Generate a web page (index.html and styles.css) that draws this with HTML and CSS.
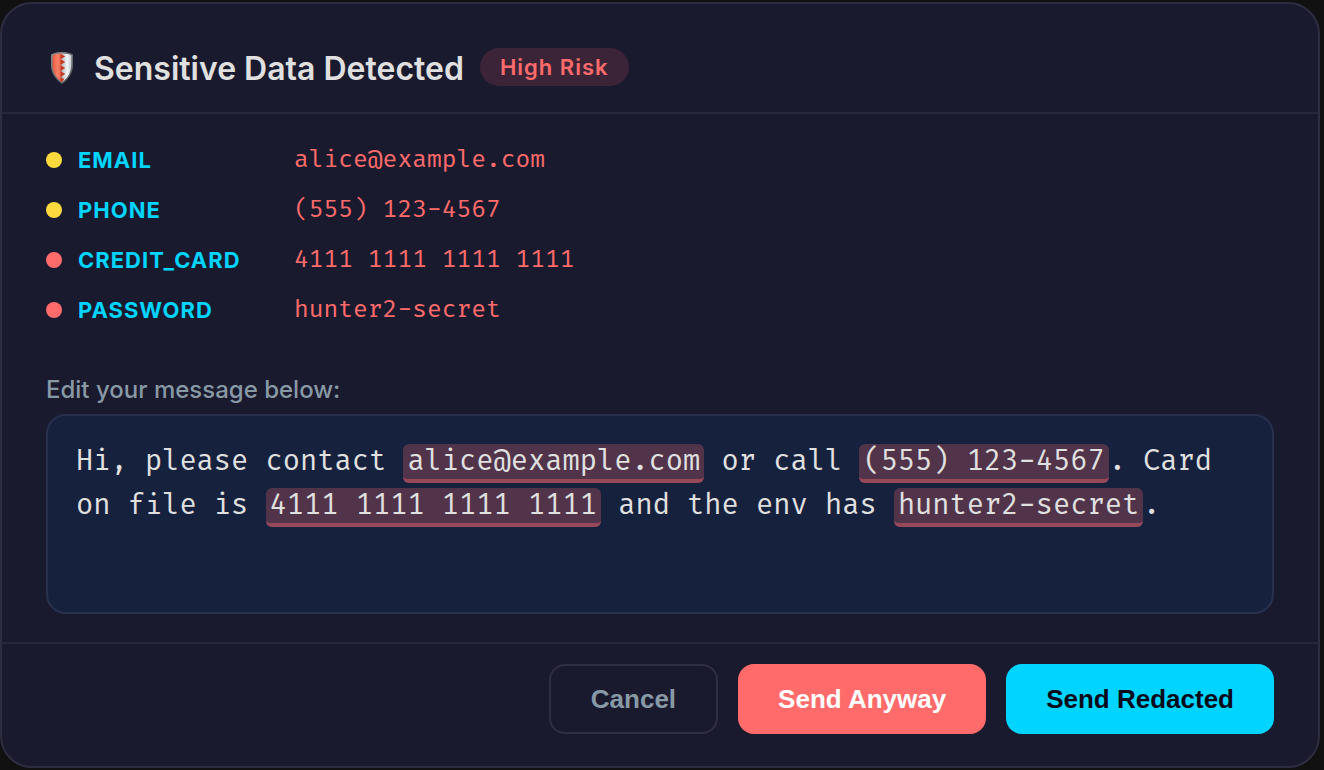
FILE: index.html
```html
<!DOCTYPE html>
<html lang="en">
<head>
  <meta charset="UTF-8">
  <meta name="viewport" content="width=device-width, initial-scale=1">
  <title>Sensitive Data Detected</title>
  <link rel="stylesheet" href="styles.css">
</head>
<body>
  <main class="dialog">
    <header class="dialog-header">
      <svg class="shield" viewBox="0 0 32 38" aria-hidden="true">
        <defs>
          <linearGradient id="rim" x1="0" y1="0" x2="1" y2="1">
            <stop offset="0" stop-color="#8b8b8d"/>
            <stop offset="1" stop-color="#555558"/>
          </linearGradient>
          <linearGradient id="red" x1="0" y1="0" x2="1" y2="0">
            <stop offset="0" stop-color="#e8583f"/>
            <stop offset="0.4" stop-color="#ff8068"/>
            <stop offset="1" stop-color="#d8452c"/>
          </linearGradient>
          <linearGradient id="silver" x1="0" y1="0" x2="1" y2="0">
            <stop offset="0" stop-color="#a9b1b6"/>
            <stop offset="0.6" stop-color="#f4f6f8"/>
            <stop offset="1" stop-color="#c5cacf"/>
          </linearGradient>
        </defs>
        <path fill="url(#rim)" d="M16 4C12.500 4 8.500 4.600 5 6.400V17C5 25 9.500 31.500 16 36C22.500 31.500 27 25 27 17V6.400C23.500 4.600 19.500 4 16 4Z"/>
        <path fill="url(#silver)" d="M15 5.500C19 5.300 22.500 6 25.300 7.400V17C25.300 24 21.800 30 16 34Z"/>
        <path fill="url(#red)" d="M15 5.500C11.800 5.600 9 6.300 6.700 7.400V17C6.700 24 10.200 30 16 34L18 31L14.500 29L19 26L14.500 23L19 20L14.500 17L19 14L14.500 11L19 8.500Z"/>
        <path fill="#c13a22" d="M14.500 6.500L19 8.500L14.500 11ZM14.500 11.500L19 14L14.500 16.500ZM14.500 17.500L19 20L14.500 22.500ZM14.500 23.500L19 26L14.500 28.500ZM13.500 30L18 31L16 34Z"/>
      </svg>
      <h1>Sensitive Data Detected</h1>
      <span class="badge">High Risk</span>
    </header>

    <section class="dialog-body">
      <ul class="findings">
        <li><span class="dot medium"></span><span class="type">EMAIL</span><span class="value">alice@example.com</span></li>
        <li><span class="dot medium"></span><span class="type">PHONE</span><span class="value">(555) 123-4567</span></li>
        <li><span class="dot high"></span><span class="type">CREDIT_CARD</span><span class="value">4111 1111 1111 1111</span></li>
        <li><span class="dot high"></span><span class="type">PASSWORD</span><span class="value">hunter2-secret</span></li>
      </ul>

      <div class="editor-label" id="editorLabel">Edit your message below:</div>
      <div class="editor" contenteditable="true" role="textbox" aria-multiline="true" aria-labelledby="editorLabel" spellcheck="false">Hi, please contact <mark>alice@example.com</mark> or call <mark>(555) 123-4567</mark>. Card on file is <mark>4111 1111 1111 1111</mark> and the env has <mark>hunter2-secret</mark>.</div>
    </section>

    <footer class="dialog-footer">
      <button type="button" class="btn-cancel">Cancel</button>
      <button type="button" class="btn-danger">Send Anyway</button>
      <button type="button" class="btn-primary">Send Redacted</button>
    </footer>
  </main>
</body>
</html>
```

FILE: styles.css
```css
* { box-sizing: border-box; }
body {
  margin: 0;
  padding: 2px 4px 2px 0;
  background: #111;
  color: #e0e0e0;
  font-family: Inter, sans-serif;
}
.dialog {
  background: #1a1a2e;
  border: 2px solid #2e2c40;
  border-radius: 32px;
}
.dialog-header {
  display: flex;
  align-items: flex-start;
  gap: 16px;
  padding: 44px 44px 22px;
  border-bottom: 2px solid #28283b;
}
.shield { width: 32px; height: 38px; }
h1 {
  margin: 0;
  font-size: 32px;
  line-height: 42px;
  font-weight: 600;
}
.badge {
  padding: 0 20px;
  border-radius: 20px;
  background: #3b2437;
  color: #ff6b6b;
  font-size: 22px;
  line-height: 38px;
  font-weight: 600;
  letter-spacing: 1px;
}
.dialog-body { padding: 28px 44px; }
.findings {
  display: flex;
  flex-direction: column;
  gap: 14px;
  margin: 0 0 44px;
  padding: 0;
  list-style: none;
}
.findings li {
  display: flex;
  align-items: center;
  gap: 16px;
  line-height: 36px;
}
.dot { width: 16px; height: 16px; border-radius: 50%; }
.medium { background: #ffd93d; }
.high { background: #ff6b6b; }
.type {
  width: 200px;
  color: #00d4ff;
  font-size: 22px;
  font-weight: 700;
  letter-spacing: 1px;
}
.value {
  color: #ff6b6b;
  font-family: "Fira Code", "Liberation Mono", monospace;
  font-size: 24px;
}
.editor-label {
  margin-bottom: 6px;
  color: #8899a6;
  font-size: 24px;
  line-height: 36px;
  font-weight: 500;
}
.editor {
  min-height: 200px;
  padding: 24px 28px;
  border: 2px solid #27314d;
  border-radius: 20px;
  background: #16213e;
  font-family: "Fira Code", "Liberation Mono", monospace;
  font-size: 28px;
  line-height: 44px;
  outline: none;
}
mark {
  padding: 0 4px;
  border-bottom: 4px solid #984959;
  border-radius: 6px;
  background: #51344a;
  color: inherit;
}
.dialog-footer {
  display: flex;
  justify-content: flex-end;
  gap: 20px;
  padding: 20px 44px 32px;
  border-top: 2px solid #28283b;
}
button {
  padding: 18px 40px;
  border: none;
  border-radius: 16px;
  font-family: "Liberation Sans", Arial, sans-serif;
  font-size: 26px;
  line-height: 34px;
  font-weight: bold;
  cursor: pointer;
}
.btn-cancel {
  padding: 16px 40px;
  border: 2px solid #302e42;
  background: transparent;
  color: #8899a6;
}
.btn-danger { background: #ff6b6b; color: #fff; }
.btn-primary { background: #00d4ff; color: #0a0a1a; }
```
